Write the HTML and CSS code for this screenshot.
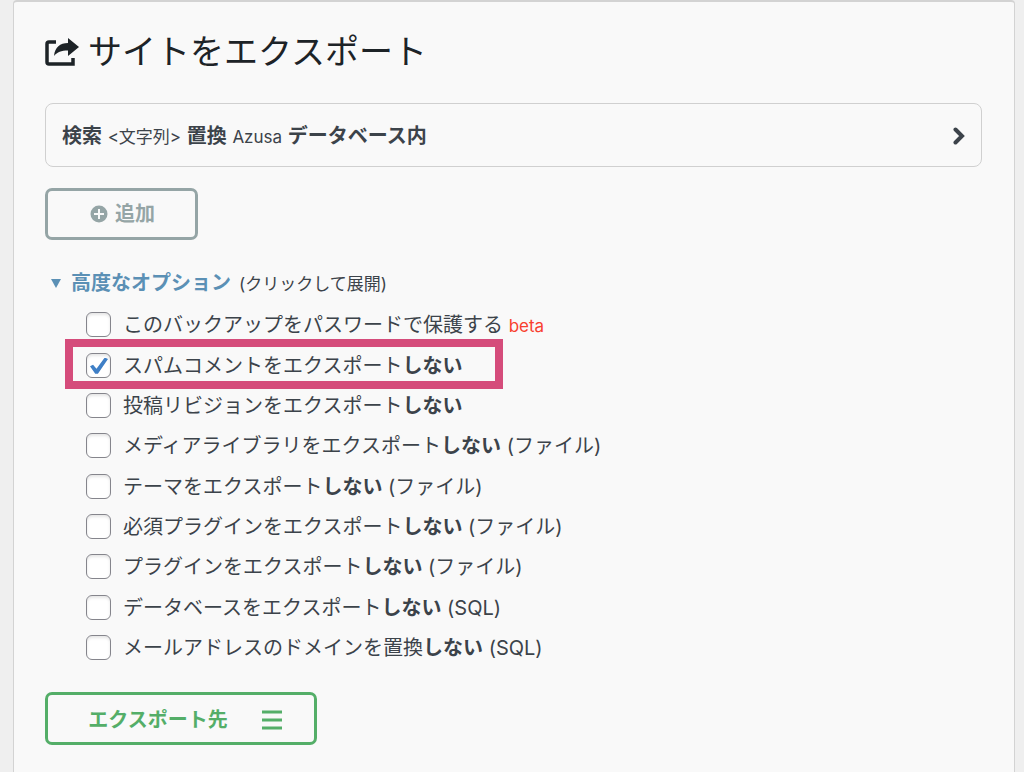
FILE: index.html
```html
<!DOCTYPE html>
<html lang="ja">
<head>
    <meta charset="UTF-8">
    <meta name="viewport" content="width=device-width, initial-scale=1.0">
    <title>サイトをエクスポート</title>
    <link rel="stylesheet" href="styles.css">
</head>
<body>
    <main class="container">
        <h1>
            <svg class="icon-export" viewBox="0 0 34 28" aria-hidden="true">
                <path d="M11 4H4Q2 4 2 6V24Q2 26 4 26H28V20" fill="none" stroke="currentColor" stroke-width="3.5"/>
                <path d="M9 18C10 9 15 5 23 5V0L34 9L23 18V12.500C16 12.500 12.500 14 9 18Z" fill="currentColor"/>
            </svg>
            サイトをエクスポート
        </h1>

        <form>
            <button type="button" class="query">
                <span><strong>検索</strong> <small>&lt;文字列&gt;</small> <strong>置換</strong> <small>Azusa</small> <strong>データベース内</strong></span>
                <svg class="icon-arrow" viewBox="0 0 12 18" aria-hidden="true">
                    <path d="M2.500 2.500L9 9L2.500 15.500" fill="none" stroke="currentColor" stroke-width="4" stroke-linecap="round"/>
                </svg>
            </button>

            <button type="button" class="button button-gray">
                <svg class="icon-plus" viewBox="0 0 18 18" aria-hidden="true">
                    <circle cx="9" cy="9" r="8.500" fill="currentColor"/>
                    <path d="M9 4V14M4 9H14" stroke="#f9f9f9" stroke-width="2"/>
                </svg>
                追加
            </button>

            <details open>
                <summary>
                    <span class="marker"></span>
                    <a href="#options">高度なオプション</a>
                    <small>(クリックして展開)</small>
                </summary>
                <ul id="options" class="options">
                    <li>
                        <label><input type="checkbox"><span>このバックアップをパスワードで保護する <small class="beta">beta</small></span></label>
                    </li>
                    <li class="highlight">
                        <label><input type="checkbox" checked><span>スパムコメントをエクスポート<strong>しない</strong></span></label>
                    </li>
                    <li>
                        <label><input type="checkbox"><span>投稿リビジョンをエクスポート<strong>しない</strong></span></label>
                    </li>
                    <li>
                        <label><input type="checkbox"><span>メディアライブラリをエクスポート<strong>しない</strong> (ファイル)</span></label>
                    </li>
                    <li>
                        <label><input type="checkbox"><span>テーマをエクスポート<strong>しない</strong> (ファイル)</span></label>
                    </li>
                    <li>
                        <label><input type="checkbox"><span>必須プラグインをエクスポート<strong>しない</strong> (ファイル)</span></label>
                    </li>
                    <li>
                        <label><input type="checkbox"><span>プラグインをエクスポート<strong>しない</strong> (ファイル)</span></label>
                    </li>
                    <li>
                        <label><input type="checkbox"><span>データベースをエクスポート<strong>しない</strong> (SQL)</span></label>
                    </li>
                    <li>
                        <label><input type="checkbox"><span>メールアドレスのドメインを置換<strong>しない</strong> (SQL)</span></label>
                    </li>
                </ul>
            </details>

            <button type="button" class="button button-green">
                エクスポート先
                <svg class="icon-menu" viewBox="0 0 20 20" aria-hidden="true">
                    <path d="M0 2H20M0 10H20M0 18H20" stroke="currentColor" stroke-width="3"/>
                </svg>
            </button>
        </form>
    </main>
</body>
</html>
```

FILE: styles.css
```css
* {
    box-sizing: border-box;
}
body {
    margin: 0;
    padding: 0 9px 0 13px;
    background-color: #efefef;
    color: #3c434a;
    font-family: Inter, "Noto Sans CJK JP", sans-serif;
    font-size: 20px;
    line-height: 30px;
}
.container {
    min-height: 100vh;
    padding: 30px 32px 26px 31px;
    background-color: #f9f9f9;
    border: 1px solid #d3d3d3;
    border-width: 2px 1px 0;
    border-radius: 4px 4px 0 0;
}
h1 {
    display: flex;
    align-items: center;
    gap: 9px;
    margin: 0 0 31px;
    color: #1d2327;
    font-size: 34px;
    font-weight: 400;
    line-height: 40px;
}
.icon-export {
    width: 34px;
    height: 28px;
}
button {
    font: inherit;
    color: inherit;
    background: none;
    cursor: pointer;
}
small {
    font-size: 17px;
}
.query {
    display: flex;
    align-items: center;
    justify-content: space-between;
    width: 100%;
    height: 64px;
    margin-bottom: 21px;
    padding: 2px 16px 0;
    border: 1px solid #d0d0d0;
    border-radius: 8px;
    text-align: left;
}
.icon-arrow {
    width: 12px;
    height: 18px;
}
.button {
    display: flex;
    align-items: center;
    justify-content: center;
    height: 52px;
    border: 3px solid;
    border-radius: 7px;
    font-weight: 700;
}
.button-gray {
    gap: 7px;
    width: 153px;
    padding: 0 4px 0 6px;
    color: #95a5a6;
}
.icon-plus {
    width: 18px;
    height: 18px;
}
.button-green {
    gap: 34px;
    width: 272px;
    height: 53px;
    padding: 2px 0 0 8px;
    color: #54ae68;
}
.icon-menu {
    width: 20px;
    height: 20px;
}
details {
    margin: 28px 0 25px;
}
summary {
    display: flex;
    align-items: baseline;
    padding-left: 6px;
    list-style: none;
    cursor: pointer;
}
summary a {
    margin: 0 8px 0 10px;
    color: #5b90b5;
    font-weight: 700;
    text-decoration: none;
}
.marker {
    align-self: center;
    border: 5px solid transparent;
    border-top: 9px solid #5b90b5;
    border-bottom: 0;
}
.options {
    margin: 5px 0 0;
    padding: 0 0 0 41px;
    list-style: none;
}
.options li {
    position: relative;
    width: fit-content;
}
.options li:nth-child(3n + 1) {
    padding-bottom: 1px;
}
.options label {
    display: flex;
    align-items: center;
    gap: 12px;
    height: 40px;
}
.options label span {
    padding-top: 2px;
}
.options input {
    appearance: none;
    flex: none;
    width: 25px;
    height: 25px;
    margin: 0;
    background-color: #fff;
    border: 1px solid #85858c;
    border-radius: 6px;
    box-shadow: inset 0 2px 3px rgba(0, 0, 0, 0.1);
}
.options input:checked::before {
    content: "";
    display: block;
    width: 18px;
    height: 17px;
    margin: 4px 3px;
    background-color: #3f7fc6;
    clip-path: polygon(0 52%, 17% 43%, 36% 66%, 82% 0, 100% 9%, 44% 95%, 29% 95%);
}
.beta {
    color: #f8402f;
}
/* 注目させたい項目の枠 */
.highlight::after {
    content: "";
    position: absolute;
    top: -6px;
    right: -41px;
    bottom: -4px;
    left: -21px;
    border: 8px solid #d54c7b;
    pointer-events: none;
}
```
